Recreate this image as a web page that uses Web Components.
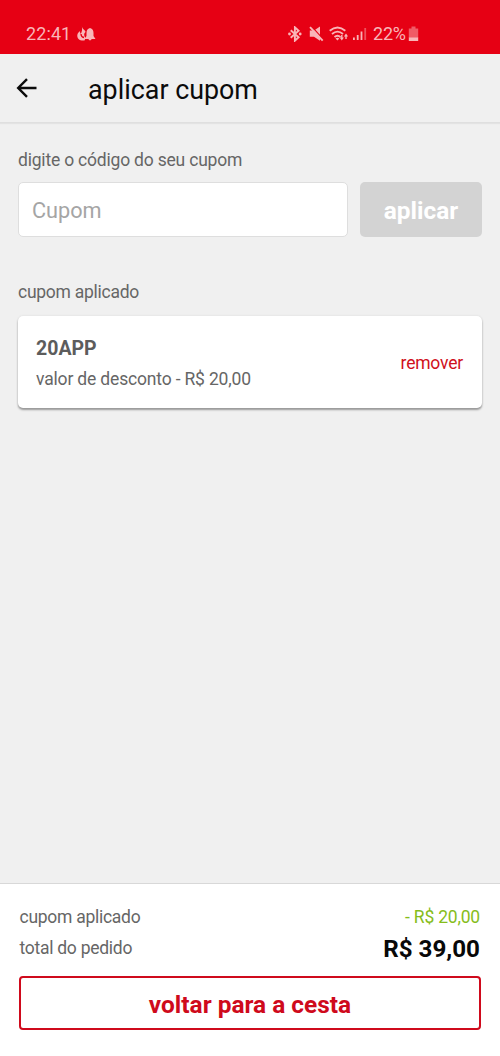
<!DOCTYPE html>
<html lang="pt-BR">
<head>
<meta charset="utf-8">
<title>aplicar cupom</title>
<style>
html,body{margin:0;height:100%}
body{background:#f0f0f0;font-family:Roboto,"Liberation Sans",sans-serif;color:#666;overflow:hidden}
</style>
</head>
<body>
<coupon-screen></coupon-screen>
<script>
const define = (name, html) => {
  const t = document.createElement('template');
  t.innerHTML = html;
  customElements.define(name, class extends HTMLElement {
    constructor() {
      super();
      this.attachShadow({mode: 'open'}).append(t.content.cloneNode(true));
    }
  });
};

define('status-bar', `
<style>
:host{display:flex;align-items:center;box-sizing:border-box;height:54px;padding:14px 81px 0 26px;background:#e60014;color:#f9b5b8;font-size:18px;line-height:22px}
.time{letter-spacing:.1px;width:51px}
svg{display:block;fill:currentColor;flex:none}
.icons{display:flex;align-items:center;margin-left:auto}
.pct{width:35px;white-space:nowrap;letter-spacing:-.2px}
</style>
<span class="time">22:41</span>
<svg width="19" height="16" viewBox="0 0 19 16"><path d="M4.800 0C5 3 8.500 4 8.500 6C6.500 7.500 7 10 8.500 12L7.500 14.500C2.500 15 0 12.500 .3 9C.5 7 2 6.500 2.500 5L3.700 8C5 6 5.500 3 4.800 0Z"/><path d="M13 2C15.500 2.500 16.500 4.500 16.500 7V10L18.500 13H7.500L9.500 10V7C9.500 4.500 10.500 2.500 13 2ZM11.300 13H14.800Q13 15.800 11.300 13Z"/><path d="M4 8Q4 11 7 11.500" fill="none" stroke="#e60014" stroke-width="1.300"/></svg>
<div class="icons">
<svg width="14" height="16" viewBox="0 0 14 16"><path d="M2.700 4.300L10.600 11.300L6.900 14.700V1.300L10.600 4.700L2.700 11.700" fill="none" stroke="currentColor" stroke-width="1.900"/><circle cx="1.500" cy="8" r="1.400"/><circle cx="12.200" cy="8" r="1.400"/></svg>
<svg style="margin-left:7px" width="15" height="16" viewBox="0 0 15 16"><path d="M.8 4.500H5L11 .6V14.800L5 10.800H.8Z"/><path d="M2.600 .4L14.600 13.700" stroke="#e60014" stroke-width="1.300"/><path d="M1 1.200L13.700 14.700" stroke="currentColor" stroke-width="1.900"/></svg>
<svg style="margin-left:5px" width="20" height="16" viewBox="0 0 20 16"><g fill="none" stroke="currentColor" stroke-width="1.800"><path d="M.7 4.800Q8.500 -1.800 16.300 4.800M3 8Q8.500 3.300 14 8M5.500 11Q8.500 8.400 11.500 11"/></g><path d="M6.500 12.500Q8.500 10.800 10.300 12.500L8.500 14.600ZM10.700 11.500H12.100V9H13.500V11.500H14.900L12.800 14.500ZM14.900 10.500L17 7.500L19.100 10.500H17.700V13H16.300V10.500Z"/></svg>
<svg style="margin-left:4px" width="14" height="14" viewBox="0 0 14 14"><path d="M0 10.500H1.800V13H0ZM3.800 8H5.600V13H3.800ZM7.600 4.500H9.400V13H7.600Z"/><path d="M11.300 1H13.100V13H11.300Z" opacity=".45"/></svg>
<span class="pct" style="margin-left:6px">22%</span>
<svg width="11" height="16" viewBox="0 0 11 16"><path d="M3.500 .5H7.500V2.500H10.200V12H.8V2.500H3.500Z" opacity=".5"/><path d="M.8 11.500H10.200V15H.8Z"/></svg>
</div>`);

define('app-bar', `
<style>
:host{display:flex;align-items:center;box-sizing:border-box;height:69px;padding:3px 16px 0;color:#0b0b0b;border-bottom:1px solid #dfdfdf;box-shadow:0 1px 1px #e3e3e3}
svg{display:block;margin:-3px 51px 0 0}
h1{margin:0;font-size:26.850px;line-height:32px;font-weight:400}
</style>
<svg width="21" height="20" viewBox="0 0 21 20" fill="none" stroke="currentColor" stroke-width="2.400"><path d="M20.500 10H2.500M11 1.200L2.200 10L11 18.800"/></svg>
<h1><slot></slot></h1>`);

define('coupon-form', `
<style>
:host{display:block}
label{display:block;font-size:17.500px;letter-spacing:-.2px;line-height:22px}
.row{display:grid;grid-template-columns:330px 122px;gap:12px;margin-top:11px}
.field,.btn{box-sizing:border-box;height:55px;border-radius:5px;display:flex;align-items:center}
.field{background:#fff;border:1.500px solid #dedede;padding:1px 0 0 13px;color:#a5a5a5;font-size:21.700px}
.btn{background:#d3d3d3;color:#fff;font-weight:700;font-size:24.400px;letter-spacing:.05px;justify-content:center;padding-top:2px}
</style>
<label>digite o código do seu cupom</label>
<div class="row"><div class="field"><span>Cupom</span></div><div class="btn"><span>aplicar</span></div></div>`);

define('coupon-card', `
<style>
:host{display:flex;align-items:center;justify-content:space-between;box-sizing:border-box;height:92px;padding:2px 19px 0 18px;border-radius:5px;background:#fff;box-shadow:0 2px 2px #999,0 0 2px #d5d5d5}
.code{font-size:19.500px;line-height:24px;font-weight:700;padding-top:1px;margin-bottom:7px;color:#5c5c5c}
.desc{font-size:17.500px;letter-spacing:-.17px;line-height:22px}
.remove{color:#d0101c;font-size:17.500px;letter-spacing:-.2px;line-height:22px}
</style>
<div><div class="code"><slot name="code"></slot></div><div class="desc"><slot name="desc"></slot></div></div>
<span class="remove">remover</span>`);

define('order-footer', `
<style>
:host{display:block;box-sizing:border-box;height:173px;padding:17px 19px 0;background:#fff;border-top:1px solid #d8d8d8}
.row{display:flex;justify-content:space-between;align-items:center;height:31px;font-size:17.500px;letter-spacing:-.27px;padding:0 1px 0 .5px}
.green{color:#86bd1b;letter-spacing:-.2px}
.total{color:#080808;font-weight:700;font-size:24.200px;letter-spacing:0;padding-top:2px}
.btn{display:flex;align-items:center;justify-content:center;box-sizing:border-box;height:54px;margin-top:13px;border:2px solid #cf0a1c;border-radius:4px;color:#cf0a1c;font-weight:700;font-size:24.450px;padding-top:3px}
</style>
<div class="row"><span>cupom aplicado</span><span class="green">- R$ 20,00</span></div>
<div class="row"><span>total do pedido</span><span class="total">R$ 39,00</span></div>
<div class="btn"><span>voltar para a cesta</span></div>`);

define('coupon-screen', `
<style>
:host{display:flex;flex-direction:column;height:1056px;width:500px}
main{flex:1;padding:26px 18px 0}
h2{margin:44px 0 13px;font-size:17.500px;letter-spacing:-.26px;line-height:22px;font-weight:400}
</style>
<status-bar></status-bar>
<app-bar>aplicar cupom</app-bar>
<main>
<coupon-form></coupon-form>
<h2>cupom aplicado</h2>
<coupon-card><span slot="code">20APP</span><span slot="desc">valor de desconto - R$ 20,00</span></coupon-card>
</main>
<order-footer></order-footer>`);
</script>
</body>
</html>
